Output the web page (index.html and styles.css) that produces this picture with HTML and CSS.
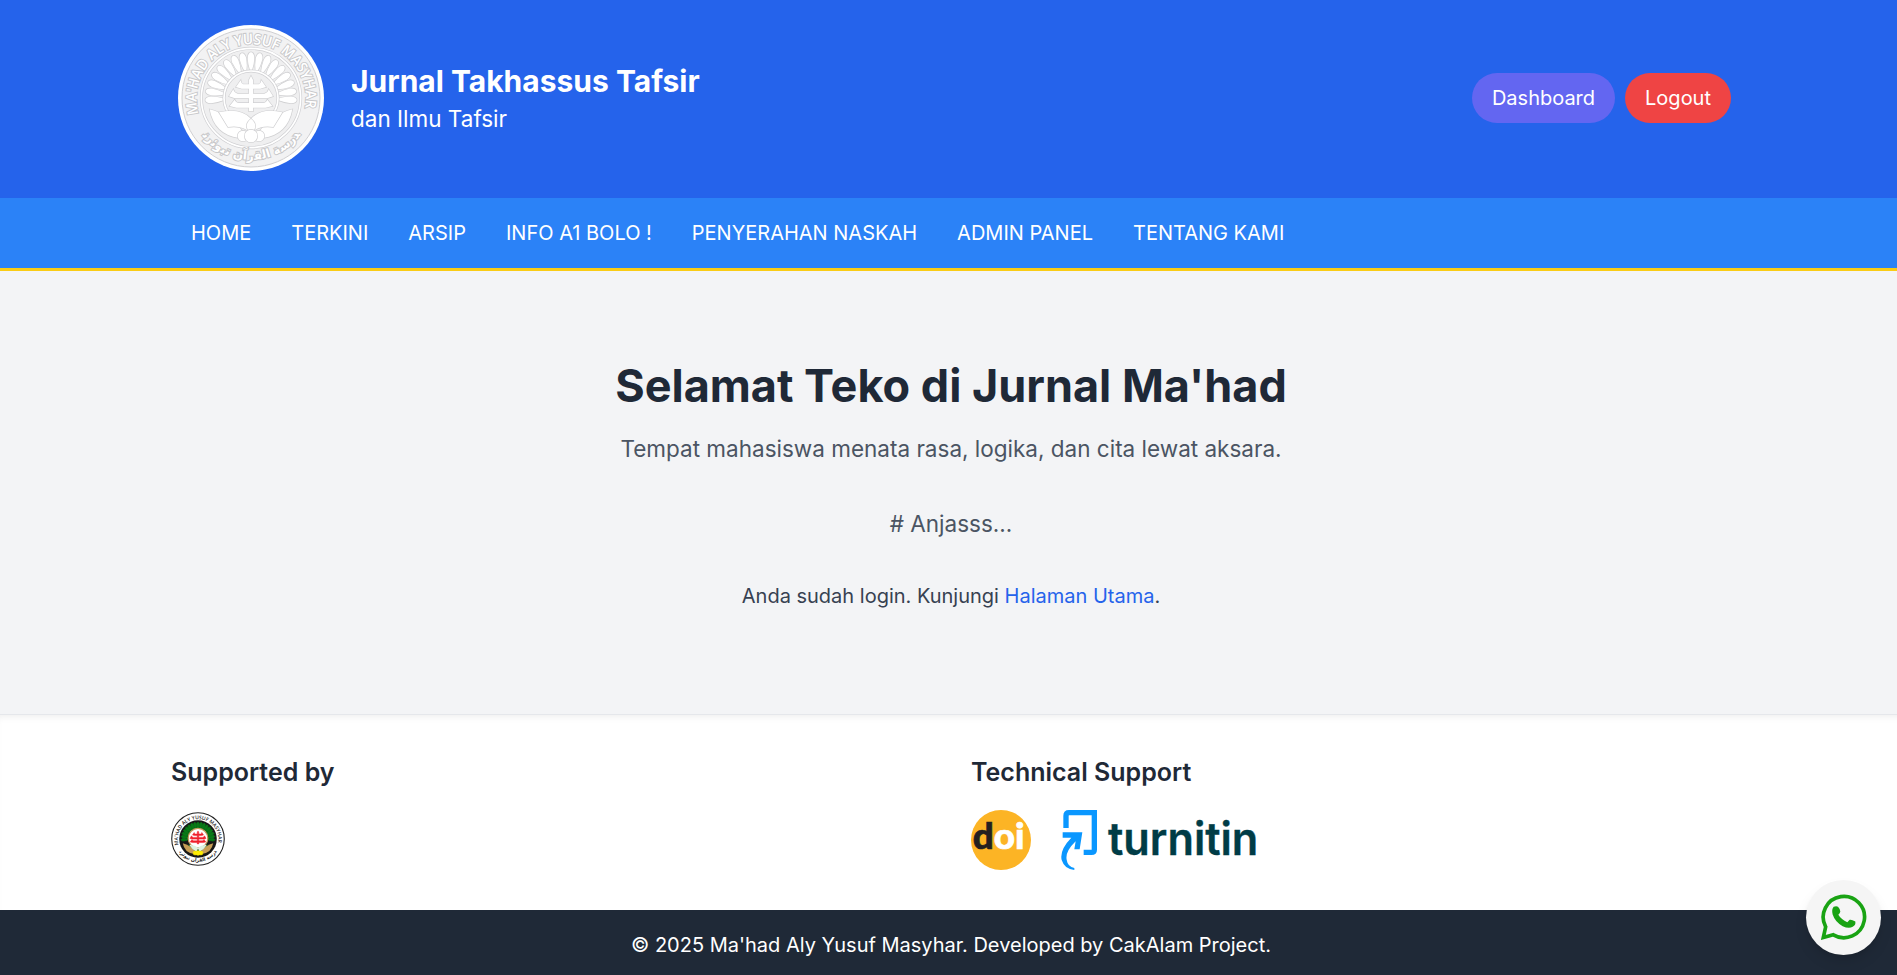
FILE: index.html
```html
<!DOCTYPE html>
<html lang="id">
<head>
<meta charset="utf-8">
<title>Jurnal Takhassus Tafsir</title>
<link rel="stylesheet" href="styles.css">
</head>
<body>
<div class="page">
  <header class="header">
    <div class="container header-row">
      <div class="brand">
        <svg class="brand-logo" viewBox="18 13 480 474">
          <defs>
            <path id="arcTop" d="M101 298A164 164 0 1 1 420 282"/>
            <path id="arcBottom" d="M105 354A184 184 0 0 0 411 354"/>
            <path id="ray" d="M248 130C249 107 267 107 268 130Q267 150 261 167H255Q249 150 248 130Z"/>
            <g id="rays">
              <use href="#ray" transform="rotate(-92.8 258 250)"/><use href="#ray" transform="rotate(-81.2 258 250)"/><use href="#ray" transform="rotate(-69.6 258 250)"/><use href="#ray" transform="rotate(-58 258 250)"/><use href="#ray" transform="rotate(-46.4 258 250)"/><use href="#ray" transform="rotate(-34.8 258 250)"/><use href="#ray" transform="rotate(-23.2 258 250)"/><use href="#ray" transform="rotate(-11.6 258 250)"/><use href="#ray"/><use href="#ray" transform="rotate(11.6 258 250)"/><use href="#ray" transform="rotate(23.2 258 250)"/><use href="#ray" transform="rotate(34.8 258 250)"/><use href="#ray" transform="rotate(46.4 258 250)"/><use href="#ray" transform="rotate(58 258 250)"/><use href="#ray" transform="rotate(69.6 258 250)"/><use href="#ray" transform="rotate(81.2 258 250)"/><use href="#ray" transform="rotate(92.8 258 250)"/>
            </g>
            <path id="cross" d="M258 184L264 196V209H281Q288 207 289 197L303 217L286 222H264V237H298Q308 235 311 224L324 245L306 251H264V265H294Q304 264 307 255L322 274L302 279H264V290H252V279H214L194 274L209 255Q212 264 222 265H252V251H210L192 245L205 224Q208 235 218 237H252V222H230L213 217L227 197Q228 207 235 209H252V196Z"/>
            <path id="book" d="M162 293Q225 278 258 312Q291 278 352 293L325 337Q284 330 258 355Q232 330 189 337Z"/>
            <path id="leafL" d="M134 284Q196 300 234 352L222 370Q148 360 134 284Z"/>
            <path id="leafR" d="M382 284Q320 300 282 352L294 370Q368 360 382 284Z"/>
            <g id="knot"><circle cx="234" cy="364" r="16"/><circle cx="282" cy="364" r="16"/><circle cx="258" cy="364" r="19"/></g>
          </defs>
          <circle cx="258" cy="250" r="219" fill="#fff"/>
          <circle cx="258" cy="250" r="207" fill="#f2f2f3" stroke="#cfcfd2" stroke-width="3"/>
          <circle cx="258" cy="250" r="149" fill="#efeff0" stroke="#cfcfd2" stroke-width="9"/>
          <circle cx="258" cy="250" r="149" fill="none" stroke="#fff" stroke-width="5"/>
          <g class="relief" stroke-width="4"><use href="#rays"/></g>
          <circle cx="258" cy="250" r="81" fill="#efeff0" stroke="#cfcfd2" stroke-width="9"/>
          <circle cx="258" cy="250" r="81" fill="none" stroke="#fff" stroke-width="5"/>
          <g class="relief" stroke-width="4">
            <use href="#cross"/>
            <use href="#leafL"/><use href="#leafR"/><use href="#book"/><path d="M258 355Q232 334 258 312Q284 334 258 355Z"/><use href="#knot"/>
          </g>
          <g class="emblem-text relief relief-text" stroke-width="6">
            <text font-size="44"><textPath href="#arcTop" textLength="588" lengthAdjust="spacingAndGlyphs">MA'HAD ALY YUSUF MASYHAR</textPath></text>
            <text class="arabic" font-size="36" text-anchor="middle"><textPath href="#arcBottom" startOffset="50%">مدرسة القرآن تبوئرنج</textPath></text>
          </g>
        </svg>
        <div class="brand-text">
          <div class="brand-title">Jurnal Takhassus Tafsir</div>
          <div class="brand-subtitle">dan Ilmu Tafsir</div>
        </div>
      </div>
      <div class="actions">
        <a class="button button-dashboard">Dashboard</a>
        <a class="button button-logout">Logout</a>
      </div>
    </div>
  </header>
  <nav class="nav">
    <div class="container nav-row">
      <a>HOME</a><a>TERKINI</a><a>ARSIP</a><a>INFO A1 BOLO !</a><a>PENYERAHAN NASKAH</a><a>ADMIN PANEL</a><a>TENTANG KAMI</a>
    </div>
  </nav>
  <main class="hero">
    <h1>Selamat Teko di Jurnal Ma'had</h1>
    <p class="lead">Tempat mahasiswa menata rasa, logika, dan cita lewat aksara.</p>
    <p class="lead tag"># Anjasss...</p>
    <p class="note">Anda sudah login. Kunjungi <a>Halaman Utama</a>.</p>
  </main>
  <section class="support">
    <div class="container support-grid">
      <div>
        <h2>Supported by</h2>
        <div class="logos">
          <svg class="seal" viewBox="38 30 440 440">
            <circle cx="258" cy="250" r="214" fill="#fff" stroke="#222" stroke-width="9"/>
            <circle cx="258" cy="250" r="153" fill="#171717"/>
            <g fill="#087a16" stroke="#087a16" stroke-width="7"><use href="#rays"/></g>
            <circle cx="258" cy="243" r="80" fill="#fff" stroke="#c49a5a" stroke-width="10"/>
            <use href="#cross" fill="#f0202c" stroke="#f0202c" stroke-width="4"/>
            <path d="M180 290L240 365L258 330L276 365L336 290L320 365H196Z" fill="#087a16"/>
            <g fill="#c79e55"><use href="#leafL"/><use href="#leafR"/></g>
            <path d="M186 296Q216 345 246 352L258 330L270 352Q300 345 330 296Q276 300 258 322Q240 300 186 296Z" fill="#dff2df"/>
            <use href="#knot" fill="#ffed00" stroke="#ffed00" stroke-width="5"/>
            <g class="emblem-text" fill="#222">
              <text font-size="42"><textPath href="#arcTop" textLength="588" lengthAdjust="spacingAndGlyphs">MA'HAD ALY YUSUF MASYHAR</textPath></text>
              <text class="arabic" font-size="38" text-anchor="middle"><textPath href="#arcBottom" startOffset="50%">مدرسة القرآن تبوئرنج</textPath></text>
            </g>
          </svg>
        </div>
      </div>
      <div>
        <h2>Technical Support</h2>
        <div class="logos">
          <svg class="doi" viewBox="35 210 178 178">
            <circle cx="124" cy="299" r="89" fill="#fcb425"/>
            <text class="doi-text" x="40" y="327" textLength="154" lengthAdjust="spacingAndGlyphs"><tspan fill="#231f20" stroke="#231f20">d</tspan><tspan fill="#fff" stroke="#fff">oi</tspan></text>
          </svg>
          <svg class="turnitin" viewBox="303 210 591 180">
            <path d="M318 264V227Q318 218 327 218H403V329Q403 337 394 337H371" fill="none" stroke="#0a97ff" stroke-width="16"/>
            <path d="M308 277H367L359 328H343L347 304Q315 335 320 359Q323 380 343 384V390Q314 388 305 360Q298 330 334 293H308Z" fill="#0a97ff"/>
            <text class="turnitin-text" x="444" y="345" textLength="451" lengthAdjust="spacingAndGlyphs">turnitin</text>
          </svg>
        </div>
      </div>
    </div>
  </section>
  <footer class="footer">© 2025 Ma'had Aly Yusuf Masyhar. Developed by CakAlam Project.</footer>
  <a class="whatsapp" aria-label="WhatsApp">
    <svg viewBox="122 101 138 140">
      <path d="M129 234L136 202A62 62 0 1 1 159 226Z" fill="none" stroke="#19a313" stroke-width="11"/>
      <path d="M160 142Q168 138 173 142Q181 151 180 156Q179 162 174 166Q183 181 201 188L208 181Q213 179 225 186Q227 197 217 202Q205 208 187 200Q164 187 157 165Q153 150 160 142Z" fill="#19a313"/>
    </svg>
  </a>
</div>
</body>
</html>
```
FILE: styles.css
```css
* { box-sizing: border-box; margin: 0; padding: 0; }
html { overflow: hidden; }
body { font: 20px/30px Inter, sans-serif; color: #1f2937; background: #f3f4f6; overflow: hidden; }
/* The canvas is slightly wider than the window and clips at the right edge. */
.page { width: 1902px; height: 975px; display: flex; flex-direction: column; overflow: hidden; }
.container { width: 1600px; margin: 0 auto; padding: 0 20px; }
.header { height: 198px; background: #2563eb; color: #fff; flex: none; }
.header-row { height: 196px; display: flex; align-items: center; justify-content: space-between; }
.brand { display: flex; align-items: center; gap: 20px; }
.brand-logo { width: 160px; height: 158px; display: block; }
.relief { fill: #fff; stroke: #d0d0d2; paint-order: stroke; }
.relief-text { stroke: #c8c8ca; }
.brand-title { font-size: 30px; line-height: 40px; font-weight: 700; }
.brand-subtitle { font-size: 22.5px; line-height: 35px; }
.actions { display: flex; gap: 10px; }
.button { height: 50px; padding: 10px 20px; border-radius: 25px; }
.button-dashboard { background: #6366f1; }
.button-logout { background: #ef4444; }
.nav { height: 73px; background: #2b82f7; border-bottom: 3px solid #facc15; color: #fff; flex: none; }
.nav-row { display: flex; height: 70px; align-items: center; }
.nav-row a { padding: 0 20px; }
.hero { height: 443px; flex: none; padding-top: 90px; text-align: center; }
.hero h1 { font-size: 45px; line-height: 50px; font-weight: 700; }
.lead { font-size: 22.5px; line-height: 35px; margin-top: 20px; color: #4b5563; }
.tag { margin-top: 40px; }
.note { margin-top: 40px; color: #374151; }
.note a { color: #2563eb; }
.support { height: 196px; flex: none; background: #fff; border-top: 1px solid #e5e7eb; box-shadow: inset 0 6px 7px -4px #0001; padding-top: 40px; }
.support-grid { display: grid; grid-template-columns: 1fr 1fr; gap: 40px; }
.support h2 { font-size: 25px; line-height: 35px; font-weight: 600; }
.logos { display: flex; align-items: center; gap: 30px; height: 60px; margin-top: 20px; }
.seal { width: 54px; height: 54px; position: relative; top: -1px; }
.doi { width: 60px; height: 60px; }
.turnitin { width: 197px; height: 60px; }
.emblem-text { font-family: "Open Sans", sans-serif; font-weight: 600; }
.arabic { font-family: "DejaVu Sans", sans-serif; }
.doi-text { font: 900 108px Lato, sans-serif; stroke-width: 2px; }
.turnitin-text { font: 600 135px Inter, sans-serif; fill: #003c46; stroke: #003c46; stroke-width: 1px; }
.footer { height: 65px; flex: none; background: #1f2937; color: #fff; text-align: center; padding-top: 20px; }
.whatsapp { position: fixed; left: 1806px; top: 880px; width: 75px; height: 75px; border-radius: 50%; background: #f5f5f5; box-shadow: 0 8px 15px -3px #0002, 0 3px 6px -2px #0002; display: flex; align-items: center; justify-content: center; }
.whatsapp svg { width: 46px; height: 47px; position: relative; top: -1px; }
```
